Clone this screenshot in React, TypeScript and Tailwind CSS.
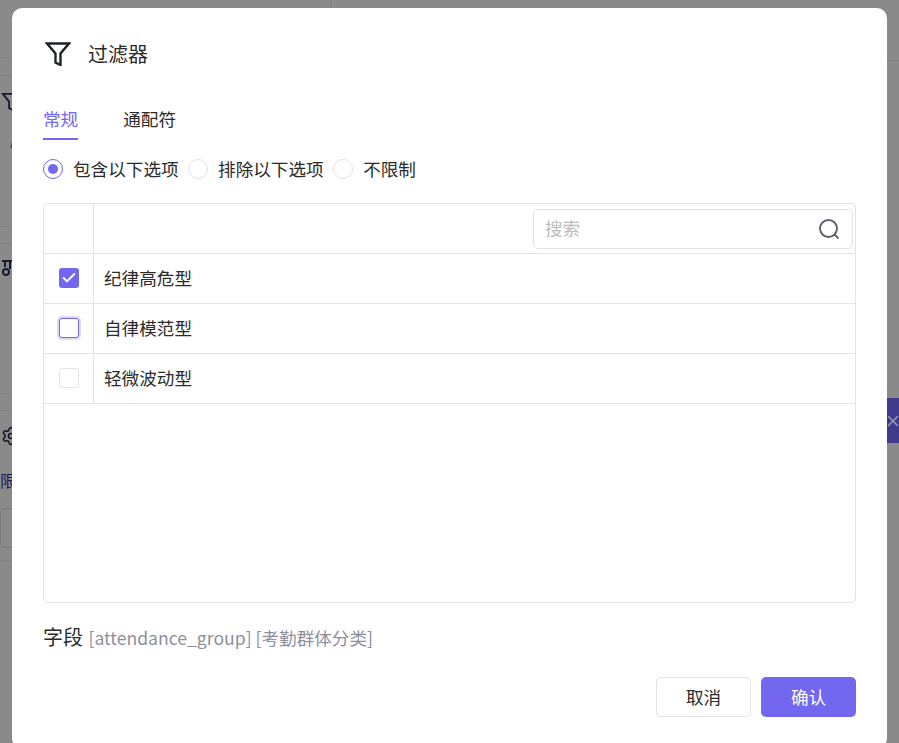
import { Check, X, Settings } from "lucide-react";

const font = { fontFamily: '"Noto Sans CJK SC", "Liberation Sans", sans-serif' };

const rows = [
  { label: "纪律高危型", state: "checked" },
  { label: "自律模范型", state: "focus" },
  { label: "轻微波动型", state: "none" },
];

function Funnel({ className, strokeWidth = 2 }: { className: string; strokeWidth?: number }) {
  return (
    <svg viewBox="0 0 26 24" fill="none" stroke="currentColor" strokeWidth={strokeWidth} strokeLinejoin="miter" className={className}>
      <polygon points="24 1.5 2 1.5 10.5 11.5 10.5 20.5 15.5 23 15.5 11.5" />
    </svg>
  );
}

function Box({ state }: { state: string }) {
  if (state === "checked")
    return (
      <div className="w-5 h-5 rounded-[3px] bg-[#7367f0] flex items-center justify-center">
        <Check className="w-4 h-4 text-white" strokeWidth={3} />
      </div>
    );
  if (state === "focus")
    return <div className="w-5 h-5 rounded-[3px] bg-white border border-[#7367f0] shadow-[0_0_0_2px_#dcd9fb]" />;
  return <div className="w-5 h-5 rounded-[3px] bg-white border border-[#e3e3e3]" />;
}

function Radio({ active, label }: { active?: boolean; label: string }) {
  return (
    <div className="flex items-center">
      {active ? (
        <div className="w-5 h-5 rounded-full border border-[#7367f0] flex items-center justify-center">
          <div className="w-[10px] h-[10px] rounded-full bg-[#7367f0]" />
        </div>
      ) : (
        <div className="w-5 h-5 rounded-full border border-[#e3e3e3]" />
      )}
      <span className="ml-[10px] text-[17.6px] leading-5 text-[#2b2b2b]">{label}</span>
    </div>
  );
}

export default function App() {
  return (
    <div className="relative w-[899px] h-[743px] overflow-hidden bg-[#8a8a8a] flex" style={font}>
      <div className="w-[12px] h-full shrink-0 flex flex-col text-[#1a1a2e]">
        <div className="h-[58px] border-b border-[#808080]" />
        <div className="h-[18px] border-b border-[#808080]" />
        <div className="h-[151px] border-b border-[#808080] pt-[16px] pl-[1px]">
          <svg viewBox="0 0 26 24" fill="none" stroke="currentColor" strokeWidth="2.4" className="w-5 h-5">
            <polygon points="23.5 1.5 2.5 1.5 10.5 11.5 10.5 20 15.5 22.5 15.5 11.5" />
          </svg>
          <div className="mt-[22px] ml-[9px] text-[14px] leading-4 text-[#3f3a8c]">A</div>
        </div>
        <div className="h-[17px] border-b border-[#808080]" />
        <div className="h-[150px] border-b border-[#808080] pt-[16px] pl-[2px]">
          <svg viewBox="0 0 10 17" fill="none" stroke="currentColor" strokeWidth="2" className="w-[10px] h-[17px]">
            <path d="M0 1h10M3 1v6M8 1v8" />
            <circle cx="4" cy="12" r="3" />
          </svg>
        </div>
        <div className="h-[17px] border-b border-[#808080]" />
        <div className="h-[150px] border-b border-[#808080] pt-[15px] pl-[1px] overflow-hidden">
          <Settings className="w-[20px] h-[20px]" strokeWidth={2} />
          <div className="mt-[22px] -ml-[1px] w-5 text-[16px] leading-6 text-[#1a1a4e]">限</div>
          <div className="mt-[16px] -ml-[1px] w-6 h-10 border border-[#7a7a7a] rounded-[5px]" />
        </div>
      </div>
      <div className="w-[319px] shrink-0" />
      <div className="w-px h-2 shrink-0 bg-[#808080]" />
      <div className="flex-1 h-[61px] border-b border-[#808080]" />

      <div className="absolute left-[880px] top-[398px] w-[19px] h-[45px] bg-[#3f3a8c] flex items-center justify-center">
        <X className="w-[18px] h-[18px] shrink-0 ml-[7px] text-[#9a9aa8]" strokeWidth={2} />
      </div>

      <div className="absolute left-3 top-2 w-[875px] h-[740px] bg-white rounded-[10px] pt-[31px] px-[31px] flex flex-col">
        <div className="flex items-center h-[30px]">
          <Funnel className="ml-[2px] w-[26px] h-6 text-[#1f2329]" strokeWidth={2.4} />
          <span className="ml-[17px] text-[20px] leading-[30px] text-[#2b2b2b]">过滤器</span>
        </div>

        <div className="flex mt-[38px] text-[17.6px] leading-6">
          <div className="pb-[7px] border-b-2 border-[#7367f0] text-[#7367f0]">常规</div>
          <div className="ml-[45px] text-[#2b2b2b]">通配符</div>
        </div>

        <div className="flex items-center gap-[9.5px] mt-[19px]">
          <Radio active label="包含以下选项" />
          <Radio label="排除以下选项" />
          <Radio label="不限制" />
        </div>

        <div className="mt-6 w-[813px] h-[400px] shrink-0 border border-[#e3e3e3] rounded-[5px]">
          <div className="flex h-[50px] border-b border-[#e3e3e3]">
            <div className="w-[50px] border-r border-[#e3e3e3]" />
            <div className="flex-1 flex items-center justify-end pr-[2px]">
              <div className="w-[320px] h-10 border border-[#e3e3e3] rounded-[5px] flex items-center justify-between pl-[11px] pr-[13px]">
                <span className="text-[17.6px] text-[#bcbcbc]">搜索</span>
                <svg viewBox="0 0 20 20" fill="none" stroke="#5f5f6b" strokeWidth="1.9" className="w-5 h-5">
                  <circle cx="9.5" cy="9.5" r="8.5" />
                  <path d="M15.5 15.5L19.5 19.5" />
                </svg>
              </div>
            </div>
          </div>
          {rows.map((r) => (
            <div key={r.label} className="flex h-[50px] border-b border-[#e3e3e3]">
              <div className="w-[50px] border-r border-[#e3e3e3] flex items-start justify-center pt-[14px]">
                <Box state={r.state} />
              </div>
              <div className="flex-1 flex items-center pl-[10px] text-[17.6px] text-[#2b2b2b]">{r.label}</div>
            </div>
          ))}
        </div>

        <div className="mt-[22px] h-6 leading-6 whitespace-pre">
          <span className="text-[20px] text-[#2b2b2b]">字段 </span>
          <span className="ml-[1px] text-[17.6px] text-[#8f8f9b]">[attendance_group] [考勤群体分类]</span>
        </div>

        <div className="flex justify-end gap-[10px] mt-[28px] w-[813px]">
          <button className="w-[95px] h-10 border border-[#e3e3e3] rounded-[5px] bg-white text-[17.6px] text-[#2b2b2b]">取消</button>
          <button className="w-[95px] h-10 rounded-[5px] bg-[#7367f0] text-[17.6px] text-white">确认</button>
        </div>
      </div>
    </div>
  );
}
